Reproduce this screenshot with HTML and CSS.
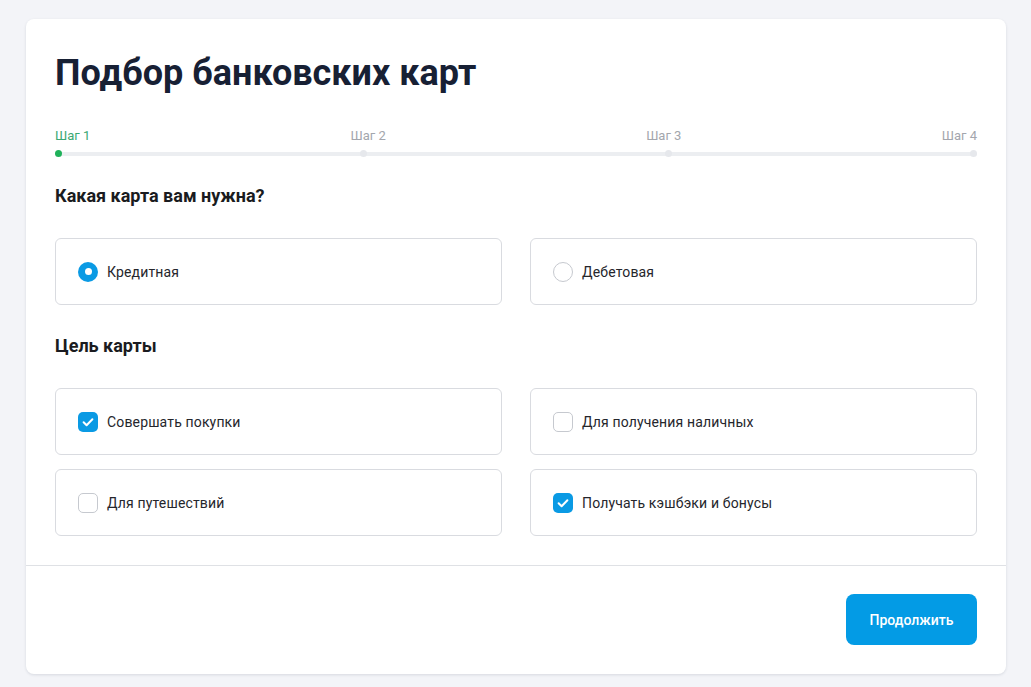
FILE: index.html
```html
<!DOCTYPE html>
<html lang="ru">
<head>
<meta charset="utf-8">
<title>Подбор банковских карт</title>
<link rel="stylesheet" href="styles.css">
</head>
<body>
<div class="card">
  <div class="card-body">
    <h1 class="title">Подбор банковских карт</h1>
    <div class="steps">
      <div class="step-labels">
        <span class="step-label active">Шаг 1</span>
        <span class="step-label">Шаг 2</span>
        <span class="step-label">Шаг 3</span>
        <span class="step-label">Шаг 4</span>
      </div>
      <div class="step-track">
        <span class="step-dot active"></span>
        <span class="step-dot"></span>
        <span class="step-dot"></span>
        <span class="step-dot"></span>
      </div>
    </div>

    <h2 class="section-title">Какая карта вам нужна?</h2>
    <div class="options">
      <label class="option">
        <span class="radio checked"></span>
        <span class="option-text">Кредитная</span>
      </label>
      <label class="option">
        <span class="radio"></span>
        <span class="option-text">Дебетовая</span>
      </label>
    </div>

    <h2 class="section-title">Цель карты</h2>
    <div class="options">
      <label class="option">
        <span class="checkbox checked"><svg viewBox="0 0 20 20" width="20" height="20"><path d="M5.6 10.3 L8.6 13.2 L14.4 7.2" fill="none" stroke="#fff" stroke-width="2" stroke-linecap="round" stroke-linejoin="round"/></svg></span>
        <span class="option-text">Совершать покупки</span>
      </label>
      <label class="option">
        <span class="checkbox"></span>
        <span class="option-text">Для получения наличных</span>
      </label>
      <label class="option">
        <span class="checkbox"></span>
        <span class="option-text">Для путешествий</span>
      </label>
      <label class="option">
        <span class="checkbox checked"><svg viewBox="0 0 20 20" width="20" height="20"><path d="M5.6 10.3 L8.6 13.2 L14.4 7.2" fill="none" stroke="#fff" stroke-width="2" stroke-linecap="round" stroke-linejoin="round"/></svg></span>
        <span class="option-text">Получать кэшбэки и бонусы</span>
      </label>
    </div>
  </div>
  <div class="card-footer">
    <button class="btn-primary" type="button">Продолжить</button>
  </div>
</div>
</body>
</html>
```

FILE: styles.css
```css
* { box-sizing: border-box; }

html, body {
  margin: 0;
  padding: 0;
}

body {
  background: #f3f4f8;
  font-family: Roboto, "Liberation Sans", Arial, sans-serif;
  padding: 19px 25px 13px 26px;
}

.card {
  background: #ffffff;
  border-radius: 8px;
  box-shadow: 0 1px 3px rgba(20, 30, 60, 0.12);
  width: 980px;
}

.card-body {
  padding: 29px 29px 29px 29px;
}

.title {
  margin: 0;
  font-size: 36px;
  line-height: 51px;
  font-weight: 700;
  color: #172034;
}

.steps {
  margin-top: 29px;
}

.step-labels {
  display: flex;
  justify-content: space-between;
  font-size: 13px;
  line-height: 15px;
  color: #a3a6ad;
}

.step-label.active {
  color: #3aa873;
}

.step-track {
  margin-top: 7px;
  position: relative;
  height: 7px;
  display: flex;
  justify-content: space-between;
  align-items: center;
}

.step-track::before {
  content: "";
  position: absolute;
  left: 0;
  right: 0;
  top: 1.5px;
  height: 4px;
  border-radius: 2px;
  background: #eceef1;
}

.step-dot {
  position: relative;
  width: 7px;
  height: 7px;
  border-radius: 50%;
  background: #e6e8ec;
}

.step-dot.active {
  background: #1fb15a;
}

.section-title {
  margin: 29px 0 32px;
  font-size: 18px;
  line-height: 20px;
  font-weight: 700;
  color: #1a1b20;
}

.options {
  display: grid;
  grid-template-columns: 1fr 1fr;
  column-gap: 28px;
  row-gap: 14px;
}

.options + .section-title {
  margin-top: 31px;
}

.option {
  display: flex;
  align-items: center;
  gap: 9px;
  height: 67px;
  padding: 0 22px;
  border: 1px solid #d9dbe0;
  border-radius: 6px;
  background: #fff;
}

.option-text {
  font-size: 14px;
  letter-spacing: 0.15px;
  color: #25262c;
}

.radio {
  width: 20px;
  height: 20px;
  border-radius: 50%;
  border: 1px solid #c6c9cf;
  flex: none;
  display: flex;
  align-items: center;
  justify-content: center;
}

.radio.checked {
  border: none;
  background: #0a9ae4;
}

.radio.checked::after {
  content: "";
  width: 7px;
  height: 7px;
  border-radius: 50%;
  background: #fff;
}

.checkbox {
  width: 20px;
  height: 20px;
  border-radius: 5px;
  border: 1px solid #c6c9cf;
  flex: none;
  display: flex;
}

.checkbox.checked {
  border: none;
  background: #0a9ae4;
}

.card-footer {
  border-top: 1px solid #dfe1e5;
  padding: 28px 29px 29px;
  display: flex;
  justify-content: flex-end;
}

.btn-primary {
  width: 131px;
  height: 51px;
  border: none;
  border-radius: 8px;
  background: #039be5;
  color: #ffffff;
  font-family: Roboto, "Liberation Sans", Arial, sans-serif;
  font-size: 14px;
  font-weight: 500;
  cursor: pointer;
}
```
